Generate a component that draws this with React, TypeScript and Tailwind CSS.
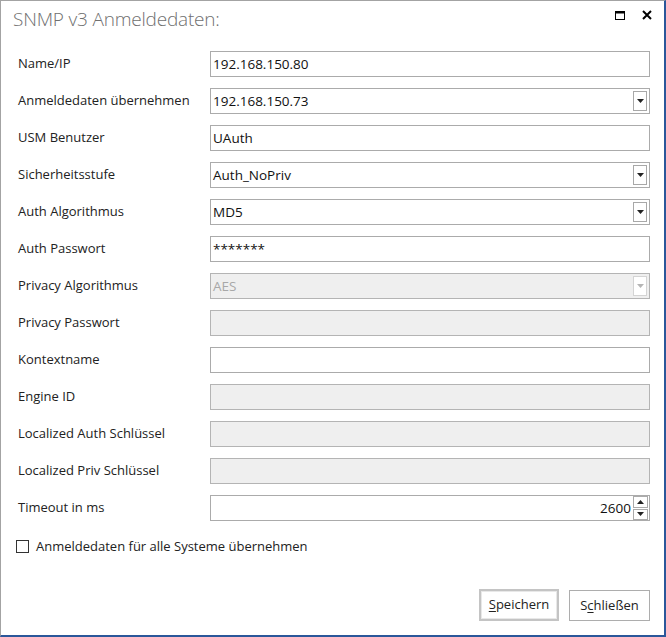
import React from 'react';

type Row = {
  label: string;
  value?: string;
  kind: 'text' | 'combo' | 'spin';
  disabled?: boolean;
};

const rows: Row[] = [
  { label: 'Name/IP', value: '192.168.150.80', kind: 'text' },
  { label: 'Anmeldedaten übernehmen', value: '192.168.150.73', kind: 'combo' },
  { label: 'USM Benutzer', value: 'UAuth', kind: 'text' },
  { label: 'Sicherheitsstufe', value: 'Auth_NoPriv', kind: 'combo' },
  { label: 'Auth Algorithmus', value: 'MD5', kind: 'combo' },
  { label: 'Auth Passwort', value: '*******', kind: 'text' },
  { label: 'Privacy Algorithmus', value: 'AES', kind: 'combo', disabled: true },
  { label: 'Privacy Passwort', kind: 'text', disabled: true },
  { label: 'Kontextname', kind: 'text' },
  { label: 'Engine ID', kind: 'text', disabled: true },
  { label: 'Localized Auth Schlüssel', kind: 'text', disabled: true },
  { label: 'Localized Priv Schlüssel', kind: 'text', disabled: true },
  { label: 'Timeout in ms', value: '2600', kind: 'spin' },
];

function Arrow({ up, light }: { up?: boolean; light?: boolean }) {
  return (
    <svg width="7" height="4" viewBox="0 0 7 4">
      <path d={up ? 'M0 4 L3.5 0 L7 4 Z' : 'M0 0 L7 0 L3.5 4 Z'} fill={light ? '#b5b5b5' : '#222'} />
    </svg>
  );
}

function Field({ row }: { row: Row }) {
  const box = row.disabled
    ? 'bg-[#efefef] border-[#b4b4b4] text-[#a8a8a8]'
    : 'bg-white border-[#ababab] text-[#111]';
  return (
    <div className={`flex-1 h-[26px] border flex items-center ${box}`}>
      <span className={`flex-1 px-[2px] text-[13.5px] ${row.kind === 'spin' ? 'text-right' : ''}`}>
        {row.value}
      </span>
      {row.kind === 'combo' && (
        <div
          className={`w-[14px] h-[20px] mr-[2px] border flex items-center justify-center bg-white ${
            row.disabled ? 'border-[#d4d4d4]' : 'border-[#a8a8a8]'
          }`}
        >
          <Arrow light={row.disabled} />
        </div>
      )}
      {row.kind === 'spin' && (
        <div className="w-[15px] h-[24px] mr-[1px] flex flex-col gap-[1px]">
          <div className="flex-1 border border-[#ababab] flex items-center justify-center">
            <Arrow up />
          </div>
          <div className="flex-1 border border-[#ababab] flex items-center justify-center">
            <Arrow />
          </div>
        </div>
      )}
    </div>
  );
}

export default function App() {
  return (
    <div
      className="w-[666px] h-[637px] bg-white border-t border-l border-[#a3a3a3] border-r-2 border-b-2 border-r-[#2b579a] border-b-[#2b579a] flex flex-col text-[#1e1e1e]"
      style={{ fontFamily: '"Open Sans", "Noto Sans", sans-serif' }}
    >
      {/* Title bar */}
      <div className="h-[49px] flex items-start justify-between pl-[12px] pr-[12px] pt-[4px]">
        <span className="text-[19px] font-light text-[#6f6f6f] tracking-[-0.2px]">SNMP v3 Anmeldedaten:</span>
        <div className="flex items-center gap-[17px] pt-[5px]">
          <svg width="10" height="9" viewBox="0 0 10 9">
            <rect x="0.5" y="0.5" width="9" height="8" fill="none" stroke="#000" />
            <rect x="0" y="0" width="10" height="2.5" fill="#000" />
          </svg>
          <svg width="10" height="10" viewBox="0 0 10 10">
            <path d="M1 1 L9 9 M9 1 L1 9" stroke="#000" strokeWidth="2" />
          </svg>
        </div>
      </div>

      {/* Form */}
      <div className="flex flex-col gap-[11px] pl-[17px] pr-[14px] pt-[1px]">
        {rows.map((r) => (
          <div key={r.label} className="flex items-center h-[26px]">
            <span className="w-[192px] text-[13px] text-[#222]">{r.label}</span>
            <Field row={r} />
          </div>
        ))}
      </div>

      <div className="flex items-center gap-[7px] pl-[15px] mt-[16px]">
        <div className="w-[13px] h-[13px] border border-[#333] bg-white" />
        <span className="text-[13px] text-[#222]">Anmeldedaten für alle Systeme übernehmen</span>
      </div>

      <div className="mt-auto mb-[14px] flex justify-end gap-[10px] pr-[14px]">
        <button className="w-[80px] h-[32px] border-2 border-[#c4c4c4] bg-white flex items-center justify-center">
          <span className="w-full h-full border border-[#e8e8e8] flex items-center justify-center text-[13px] text-[#222]">
            <span className="underline underline-offset-2">S</span>peichern
          </span>
        </button>
        <button className="w-[81px] h-[31px] border border-[#adadad] bg-white text-[13px] text-[#222] mt-[1px]">
          S<span className="underline underline-offset-2">c</span>hließen
        </button>
      </div>
    </div>
  );
}
